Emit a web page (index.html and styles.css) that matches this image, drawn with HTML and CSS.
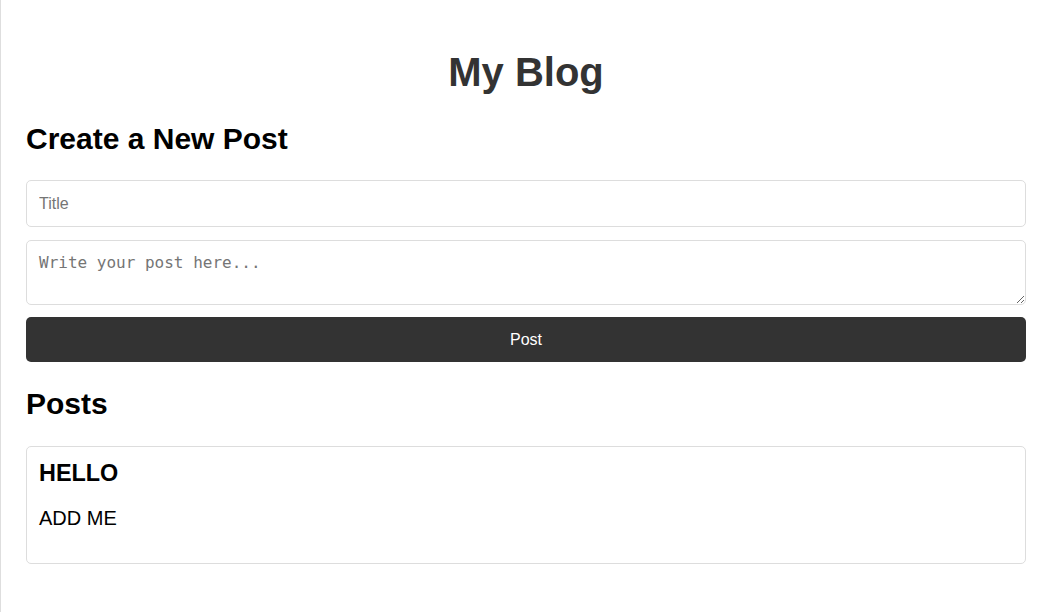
FILE: index.html
```html
<!DOCTYPE html>
<html lang="en">
<head>
<meta charset="utf-8">
<title>My Blog</title>
<link rel="stylesheet" href="styles.css">
</head>
<body>
<div class="page">
  <h1 class="site-title">My Blog</h1>
  <section class="composer">
    <h2 class="section-title">Create a New Post</h2>
    <form class="post-form">
      <input class="field field-title" type="text" placeholder="Title">
      <textarea class="field field-body" placeholder="Write your post here..."></textarea>
      <button class="post-button" type="button">Post</button>
    </form>
  </section>
  <section class="posts">
    <h2 class="section-title">Posts</h2>
    <article class="post-card">
      <h3 class="post-title">HELLO</h3>
      <p class="post-body">ADD ME</p>
    </article>
  </section>
</div>
</body>
</html>
```
FILE: styles.css
```css
html, body {
  margin: 0;
  padding: 0;
  background: #fff;
}

body {
  font-family: "Liberation Sans", Arial, sans-serif;
  font-size: 20px;
  color: #000;
}

.page {
  box-sizing: content-box;
  width: 1000px;
  min-height: 589px;
  padding: 23px 0 0 25px;
  border-left: 1px solid #dedede;
}

.site-title {
  margin: 0.67em 0;
  font-size: 40px;
  text-align: center;
  color: #333;
}

.section-title {
  font-size: 30px;
  margin: 0.83em 0;
}

.post-form {
  display: flex;
  flex-direction: column;
}

.field {
  box-sizing: border-box;
  width: 100%;
  display: block;
  padding: 12px;
  font-size: 16px;
  border: 1px solid #ddd;
  border-radius: 5px;
  background: #fff;
  color: #000;
}

.field::placeholder {
  color: #757575;
}

.field-title {
  font-family: "Liberation Sans", Arial, sans-serif;
  height: 47px;
  margin-bottom: 13px;
}

.field-body {
  font-family: "DejaVu Sans Mono", monospace;
  height: 65px;
  margin-bottom: 12px;
}

.post-button {
  box-sizing: border-box;
  display: block;
  width: 100%;
  height: 45px;
  border: none;
  border-radius: 5px;
  background: #333;
  color: #fff;
  font-family: "Liberation Sans", Arial, sans-serif;
  font-size: 16px;
}

.post-card {
  border: 1px solid #ddd;
  border-radius: 5px;
  padding: 13px 12px;
}

.post-title {
  margin: 0;
  font-size: 23.4px;
}

.post-body {
  margin: 20px 0;
}
```
